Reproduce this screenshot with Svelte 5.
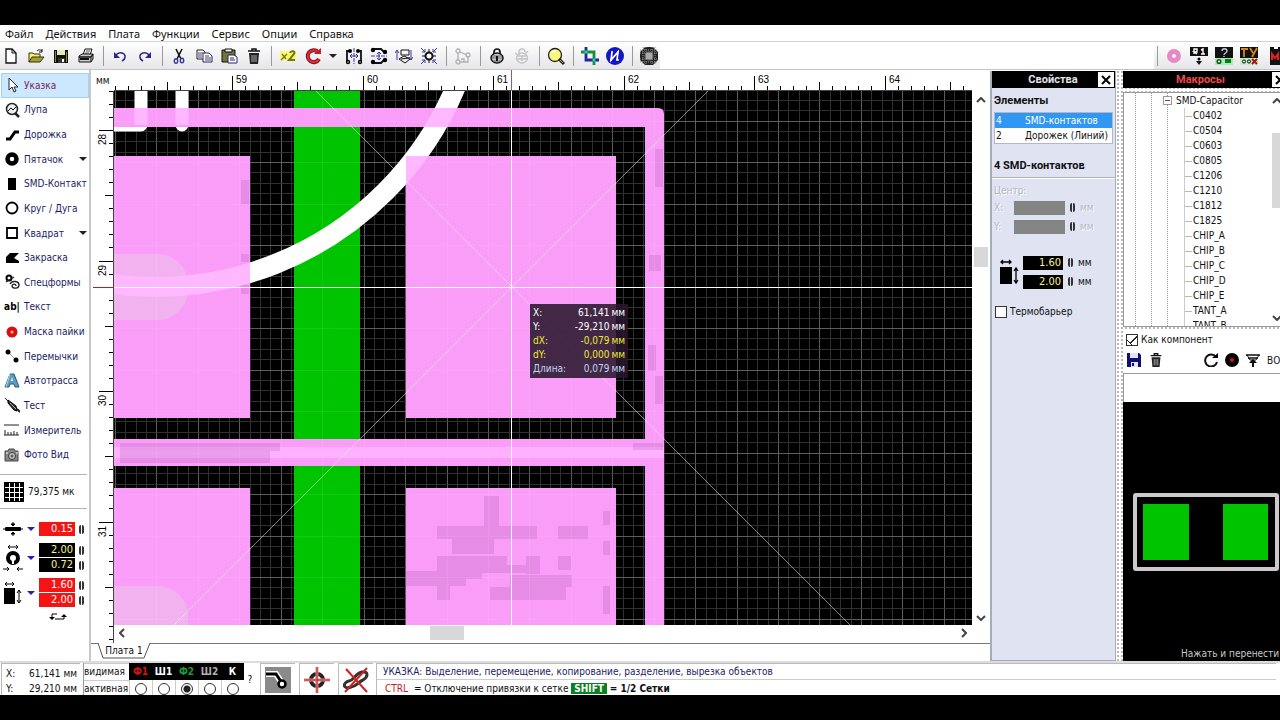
<script lang="ts">
    type tool = {name: string; icon: string; more?: boolean;};
    type layer = {id: string; name: string; color: string;};
    type tick = {pos: number; size: number; label: string;};

    const menu = ['Файл', 'Действия', 'Плата', 'Функции', 'Сервис', 'Опции', 'Справка'];

    // toolbar groups, a separator is drawn between them
    const groups = [
        ['new', 'open', 'save', 'print'],
        ['undo', 'redo'],
        ['cut', 'copy', 'paste', 'trash'],
        ['twice', 'rotate', 'caret', 'mirrorh', 'mirrorv', 'align', 'snap'],
        ['links'],
        ['lock', 'unlock'],
        ['zoom'],
        ['crop', 'info'],
        ['mask']
    ];
    const extra = ['ring', 'r1', 'check', 'ty', 'macro'];

    const tools: tool[] = [
        {name: 'Указка', icon: 'pointer'},
        {name: 'Лупа', icon: 'loupe'},
        {name: 'Дорожка', icon: 'track'},
        {name: 'Пятачок', icon: 'pad', more: true},
        {name: 'SMD-Контакт', icon: 'smd'},
        {name: 'Круг / Дуга', icon: 'circle'},
        {name: 'Квадрат', icon: 'square', more: true},
        {name: 'Закраска', icon: 'zone'},
        {name: 'Спецформы', icon: 'forms'},
        {name: 'Текст', icon: 'text'},
        {name: 'Маска пайки', icon: 'solder'},
        {name: 'Перемычки', icon: 'jumper'},
        {name: 'Автотрасса', icon: 'auto'},
        {name: 'Тест', icon: 'test'},
        {name: 'Измеритель', icon: 'measure'},
        {name: 'Фото Вид', icon: 'photo'}
    ];
    let active = 'Указка';

    const layers: layer[] = [
        {id: 'f1', name: 'Ф1', color: '#d01818'},
        {id: 's1', name: 'Ш1', color: '#ffffff'},
        {id: 'f2', name: 'Ф2', color: '#1c9a38'},
        {id: 's2', name: 'Ш2', color: '#b0b0b0'},
        {id: 'k', name: 'К', color: '#ffffff'}
    ];
    let layer = 'f2';

    const macros = ['C0402', 'C0504', 'C0603', 'C0805', 'C1206', 'C1210', 'C1812', 'C1825',
        'CHIP_A', 'CHIP_B', 'CHIP_C', 'CHIP_D', 'CHIP_E', 'TANT_A', 'TANT_B'];

    let thermal = false;
    let component = true;

    // 1 mm on the board is 130.5 px, the rulers have a tick for every 0.1 mm
    function ruler(origin: number, first: number): tick[] {
        const list: tick[] = [];
        for (let i = -9; i < 200; i++) {
            const whole = i % 10 === 0;
            list.push({
                pos: Math.round(origin + i * 13.05),
                size: whole ? 14 : i % 5 === 0 ? 8 : 4,
                label: whole ? String(first + i / 10) : ''
            });
        }
        return list;
    }
    const top = ruler(118, 59);
    const left = ruler(39, 28);

    const gridx = Array.from({length: 250}, (_, i) => ({pos: Math.round(1 + i * 10.36), major: i % 4 === 0}));
    const gridy = Array.from({length: 150}, (_, i) => ({pos: Math.round(-12 + i * 10.375), major: i % 4 === 0}));

    // darker patches over the pads: x, y, width, height
    const patches = [
        [370, 405, 15, 30], [323, 435, 100, 13], [444, 435, 30, 13], [338, 448, 42, 15], [323, 465, 70, 16],
        [292, 480, 76, 8], [292, 488, 60, 7], [323, 495, 13, 14], [368, 474, 44, 8], [412, 465, 14, 18],
        [444, 465, 13, 14], [396, 484, 62, 12], [376, 496, 76, 13], [489, 420, 7, 14], [489, 450, 7, 14],
        [489, 495, 7, 28], [127, 89, 8, 24], [127, 194, 8, 9], [127, 163, 8, 8], [541, 58, 8, 38],
        [535, 164, 12, 16], [534, 254, 8, 26], [541, 285, 8, 28], [519, 352, 30, 7], [6, 352, 160, 8],
        [6, 360, 150, 12]
    ];

    const k = 'fill="none" stroke="#111"';
    const icons: Record<string, string> = {
        new: `<path d="M4 2h6l4 4v10H4z" fill="#fff" stroke="#111" stroke-width="1.3"/><path d="M10 2v4h4" ${k}/>`,
        open: `<path d="M2 15V6h4l1 1h6v3" fill="#f5ef78" stroke="#33330a"/><path d="M2 15l3-5h12l-4 5z" fill="#a6a033" stroke="#33330a"/><path d="M10 4c2-2 4-1 5 0m0-2v3h-3" ${k}/>`,
        save: `<path d="M2 3h14v13H2z" fill="#111"/><path d="M5 3h8v5H5z" fill="#e8e8b8"/><path d="M3 4h1v11H3zM14 5h1v10h-1z" fill="#8a8a30"/><path d="M6 11h7v5H6z" fill="#333"/><path d="M10 12h2v3h-2z" fill="#fff"/>`,
        print: `<path d="M6 8l2-6h7l-2 6z" fill="#fff" stroke="#111"/><path d="M9 4h4M8 6h4" stroke="#555"/><path d="M2 9l3-2h11l-2 3H2zM2 10h12v5H2zM14 10l2-3v5l-2 3" fill="#ccc" stroke="#111"/><path d="M3 12h9" stroke="#111" stroke-width="2"/>`,
        undo: `<path d="M5 8c3-4 10-2 9 2 0 2-1 3-3 4" fill="none" stroke="#28288c" stroke-width="1.5"/><path d="M3 5v6h6z" fill="#28288c"/>`,
        redo: `<path d="M13 8c-3-4-10-2-9 2 0 2 1 3 3 4" fill="none" stroke="#28288c" stroke-width="1.5"/><path d="M15 5v6H9z" fill="#28288c"/>`,
        cut: `<path d="M6 2l5 10M12 2L7 12" ${k} stroke-width="1.6"/><g fill="none" stroke="#3838a0" stroke-width="1.4"><ellipse cx="6" cy="14" rx="1.7" ry="2.3"/><ellipse cx="12" cy="13.500" rx="1.700" ry="2.300"/></g>`,
        copy: `<path d="M2 3h6l2 2v7H2z" fill="#fff" stroke="#222"/><path d="M3 6h5M3 8h4M3 10h4" stroke="#446"/><path d="M8 6h6l3 3v6H8z" fill="#fff" stroke="#24246c"/><path d="M10 9h4M10 11h6M10 13h6" stroke="#446"/>`,
        paste: `<path d="M2 3h13v12H2z" fill="#74743a" stroke="#111"/><path d="M5 2h7v3H5z" fill="#eee" stroke="#111"/><path d="M8 8h6l3 2v6H8z" fill="#fff" stroke="#24246c"/><path d="M10 11h4M10 13h5" stroke="#24246c"/>`,
        trash: `<path d="M3 4h12M7 4V2h4v2" ${k} stroke-width="1.5"/><path d="M4 6h10l-1 11H5z" fill="#222"/><path d="M7 8v7M9 8v7M11 8v7" stroke="#aaa"/>`,
        twice: `<path d="M1 4h16v9H1z" fill="#f8f878"/><path d="M2 13l6-6M3 7l4 5" stroke="#77770a" stroke-width="1.4"/><path d="M11 6c1-3 6-2 4 1l-5 6h6" fill="none" stroke="#77770a" stroke-width="2"/>`,
        rotate: `<path d="M14 5a6 6 0 1 0 1 7" fill="none" stroke="#7c1220" stroke-width="4"/><path d="M14 5a6 6 0 1 0 1 7" fill="none" stroke="#e42b35" stroke-width="2"/><path d="M10 7h7V1z" fill="#c21e2a"/>`,
        caret: `<path d="M4 7h8l-4 4z" fill="#222"/>`,
        mirrorh: `<path d="M9 1v16" stroke="#3838a8" stroke-dasharray="4 1"/><path d="M5 9h8M7 7L5 9l2 2M11 7l2 2-2 2" fill="none" stroke="#3838a8"/><path d="M5 4H2v10M13 4h3v10" ${k} stroke-width="1.8"/><circle cx="5" cy="4" r="2"/><circle cx="13" cy="4" r="2"/><circle cx="3" cy="15" r="2.200"/><circle cx="15" cy="15" r="2.200"/><circle cx="3" cy="15" r="0.700" fill="#fff"/><circle cx="15" cy="15" r="0.700" fill="#fff"/>`,
        mirrorv: `<path d="M1 9h16" stroke="#3838a8" stroke-dasharray="4 1"/><path d="M9 5v8M7 7l2-2 2 2M7 11l2 2 2-2" fill="none" stroke="#3838a8"/><path d="M3 2h8l3 3M3 16h8l3-3" ${k} stroke-width="1.800"/><circle cx="3" cy="3" r="2.200"/><circle cx="15" cy="5" r="2.200"/><circle cx="3" cy="15" r="2.200"/><circle cx="15" cy="13" r="2.200"/>`,
        align: `<path d="M6 3h8v5H6z" ${k}/><path d="M4 12l5-3 6 3-5 4z" ${k}/><path d="M6 12l8-1" ${k}/><path d="M2 13V4M0 6l2-3 2 3M16 3v10M14 10l2 3 2-3" fill="none" stroke="#3838a8"/>`,
        snap: `<circle cx="9" cy="9" r="3.500" fill="#fff" stroke="#111" stroke-width="2"/><path d="M9 2v3M9 13v3M2 9h3M13 9h3" stroke="#111"/><g fill="none" stroke="#3838a8"><path d="M1 1l4 4M5 2v3H2M17 1l-4 4M13 2v3h3M1 17l4-4M2 13h3v3M17 17l-4-4M16 13h-3v3"/></g>`,
        links: `<g fill="none" stroke="#b0b0b0" stroke-width="1.300"><circle cx="4" cy="4" r="2"/><circle cx="4" cy="15" r="2"/><path d="M4 6v7M6 5l7 3M6 15h8V9M7 12h3v3"/><circle cx="14" cy="8" r="2"/></g>`,
        lock: `<path d="M6 8V5a3 3 0 0 1 6 0v3" ${k} stroke-width="1.700"/><ellipse cx="9" cy="11" rx="6" ry="5" fill="#ccc" stroke="#111" stroke-width="1.500"/><path d="M4 9h10M4 11h10M5 14h8" stroke="#666"/><path d="M9 9v5" stroke="#111" stroke-width="2"/>`,
        unlock: `<g fill="none" stroke="#c4c4c4" stroke-width="1.400"><path d="M6 8V5a3 3 0 0 1 6 0"/><ellipse cx="9" cy="11" rx="5.500" ry="5"/><path d="M4 9h10M4 12h10M9 9v5M2 6l3 2M15 4l-3 3"/></g>`,
        zoom: `<circle cx="8" cy="8" r="6.500" fill="#fbf77c" stroke="#222" stroke-width="1.300"/><path d="M5 6c1-2 3-2 4-2" stroke="#fff" fill="none" stroke-width="1.500"/><path d="M12 12l5 5" stroke="#222" stroke-width="3"/><path d="M13 13l3 3" stroke="#b9a82b"/>`,
        crop: `<path d="M5 0v13h13" fill="none" stroke="#24249c" stroke-width="2.800"/><path d="M0 5h13v13" fill="none" stroke="#189038" stroke-width="2.800"/><circle cx="5" cy="5" r="1.500" fill="#30c8d8"/><circle cx="13" cy="13" r="1.500" fill="#30c8d8"/>`,
        info: `<circle cx="9" cy="9" r="9" fill="#1414c8"/><path d="M6 5L5 13L12 5L11 13M4 13h2M10 13h3M5 5h2M11 5h2" fill="none" stroke="#fff" stroke-width="1.700"/>`,
        mask: `<path d="M5 0h8l5 5v8l-5 5H5l-5-5V5z" fill="#222"/><path d="M3 0v18M6 0v18M12 0v18M15 0v18M0 3h18M0 6h18M0 12h18M0 15h18" stroke="#999" stroke-dasharray="1 1"/><circle cx="9" cy="9" r="4.500" fill="#777"/><path d="M6 7h6M6 9h6M6 11h6M7 6v6M9 6v6M11 6v6" stroke="#bbb"/>`,
        ring: `<circle cx="9" cy="9" r="4.500" fill="none" stroke="#e48bc4" stroke-width="5"/>`,
        r1: `<path d="M0 0h18v9H0z" fill="#111"/><path d="M4 7V2h3v3H4l3 2M11 3l2-1v5M11 7h4" fill="none" stroke="#fff" stroke-width="1.400"/><circle cx="9" cy="12" r="1.500"/><path d="M6 14h6l-3 4z" fill="#111"/>`,
        check: `<path d="M0 0h18v11H0z" fill="#111"/><path d="M7 4c0-3 5-3 5 0 0 2-3 2-3 4M9 9v1" fill="none" stroke="#bcc8e0" stroke-width="1.400"/><path d="M0 11h18v7H0z" fill="#a5eeb0"/><circle cx="4" cy="14.500" r="1.800" fill="#fff" stroke="#125520" stroke-width="1.500"/><path d="M10 12h6v4h-6z" fill="#0b7a20"/>`,
        ty: `<path d="M0 0h18v11H0z" fill="#111"/><path d="M1 2h7M4 2v8M10 1l3 5M17 1l-5 9" fill="none" stroke="#d88418" stroke-width="1.800"/><path d="M0 11h18v7H0z" fill="#c4eec4"/><circle cx="4" cy="14.500" r="1.600" ${k}/><circle cx="9" cy="14.500" r="1.600" ${k}/><path d="M12 12l5 5M17 12l-5 5" stroke="#b01010" stroke-width="2"/>`,
        macro: `<path d="M5 0h13v18H5z" fill="#111"/><path d="M7 13V7l3 4 3-4v6" fill="none" stroke="#e02020" stroke-width="2"/><path d="M9 0h4v2H9z" fill="#fff"/>`,

        pointer: `<path d="M5 1v12l3-3 2 5 2-1-2-4h4z" fill="#fff" stroke="#223"/>`,
        loupe: `<circle cx="8" cy="7" r="5.500" fill="#eee" stroke="#222" stroke-width="1.500"/><path d="M4 9l3-3 2 2 3-3" ${k}/><path d="M11 11l4 4" stroke="#222" stroke-width="2.500"/>`,
        track: `<path d="M2 12h4l5-7h4" fill="none" stroke="#000" stroke-width="3"/>`,
        pad: `<circle cx="8" cy="8" r="4.500" fill="#fff" stroke="#000" stroke-width="4.500"/>`,
        smd: `<path d="M4 2h8v12H4z"/>`,
        circle: `<circle cx="8" cy="8" r="5.500" fill="none" stroke="#000" stroke-width="1.800"/>`,
        square: `<path d="M3 3h10v10H3z" fill="none" stroke="#000" stroke-width="1.800"/>`,
        zone: `<path d="M2 13V7l4-4h9l-5 5 5 3v2z"/>`,
        forms: `<circle cx="5" cy="4" r="2.500" fill="none" stroke="#000" stroke-width="2"/><path d="M2 8l8-5M6 10c2-4 9-3 9 1 0 4-7 4-7 1 0-2 4-3 4 0" fill="none" stroke="#222" stroke-width="1.400"/>`,
        solder: `<circle cx="8" cy="8" r="3.500" fill="#ffb0a0" stroke="#d81010" stroke-width="4"/>`,
        jumper: `<path d="M4 4l8 8" stroke="#999"/><circle cx="4" cy="4" r="2.500"/><circle cx="12" cy="12" r="2.500"/>`,
        auto: `<path d="M1 14L6 1h4l5 13h-4l-1-3H6l-1 3z" fill="#5c9cc0" stroke="#2c5878"/><path d="M7 8l1-4 1 4z" fill="#fff"/><path d="M6 1L2 14" stroke="#b4dcf0"/>`,
        test: `<path d="M1 1l4 4" stroke="#222"/><path d="M4 3l8 6 1 5-3-1-6-7z" fill="#333" stroke="#000"/><path d="M13 12l3 3" stroke="#222" stroke-width="2"/><path d="M6 6l6 6" stroke="#aaa"/>`,
        measure: `<path d="M0 3h15M0 13h15" stroke="#222"/><path d="M1 8v5M4 10v3M7 10v3M10 9v4M13 10v3" stroke="#222"/>`,
        photo: `<path d="M1 4h3l1-2h5l1 2h3v10H1z" fill="#888" stroke="#444"/><circle cx="8" cy="9" r="3.500" fill="#ccc" stroke="#333"/><circle cx="8" cy="9" r="1.500" fill="#555"/><path d="M2 6h2M12 6h2" stroke="#eee"/>`
    };
</script>

<div class="screen">
<div class="app">
    <nav class="menu">
        {#each menu as item}
            <button>{item}</button>
        {/each}
    </nav>

    <div class="toolbar">
        <div class="group">
            {#each groups as group, i}
                {#if i > 0}<span class="sep"></span>{/if}
                {#each group as name}
                    <button class:narrow={name === 'caret'} aria-label={name}>
                        <svg viewBox="0 0 18 18" width="18" height="18">{@html icons[name]}</svg>
                    </button>
                {/each}
            {/each}
        </div>
        <div class="group right">
            <span class="sep"></span>
            {#each extra as name}
                <button aria-label={name}>
                    <svg viewBox="0 0 18 18" width="18" height="18">{@html icons[name]}</svg>
                </button>
            {/each}
        </div>
    </div>

    <div class="work">
        <aside class="side">
            <div class="tools">
                {#each tools as {name, icon, more}}
                    <button class:active={active === name} on:click={() => (active = name)}>
                        {#if icon === 'text'}
                            <span class="ab">ab|</span>
                        {:else}
                            <svg viewBox="0 0 16 16" width="16" height="16">{@html icons[icon]}</svg>
                        {/if}
                        <span class="tool-name">{name}</span>
                        {#if more}<span class="more"></span>{/if}
                    </button>
                {/each}
            </div>

            <div class="grid-size">
                <svg viewBox="0 0 20 20" width="20" height="20">
                    <rect width="20" height="20" />
                    <path d="M5.500 1v18M10.500 1v18M15.500 1v18M1 5.500h18M1 10.500h18M1 15.500h18" stroke="#fff" />
                </svg>
                <span>79,375 мк</span>
            </div>

            <div class="sizes">
                <div class="size">
                    <svg viewBox="0 0 20 16" width="20" height="16">
                        <rect x="2" y="6" width="16" height="4" rx="1" />
                        <path d="M0 8h20M8 3h4l-2 2zM8 13h4l-2-2zM10 1v3M10 12v3" stroke="#000" />
                    </svg>
                    <span class="blue"></span>
                    <div class="values">
                        <input class="red" aria-label="Ширина дорожки" value="0.15" />
                    </div>
                    <div class="spins"><span class="spin"></span></div>
                </div>
                <div class="size">
                    <svg viewBox="0 0 20 28" width="20" height="28">
                        <circle cx="10" cy="14" r="5" fill="#fff" stroke="#000" stroke-width="4" />
                        <path d="M10 14v6" stroke="#fff" stroke-width="2" />
                        <path d="M5 3h10M7 1L5 3l2 2M13 1l2 2-2 2M0 25h6M4 23l2 2-2 2M20 25h-6M16 23l-2 2 2 2" fill="none" stroke="#000" />
                    </svg>
                    <span class="blue"></span>
                    <div class="values">
                        <input aria-label="Внешний диаметр" value="2.00" />
                        <input aria-label="Внутренний диаметр" value="0.72" />
                    </div>
                    <div class="spins"><span class="spin"></span><span class="spin"></span></div>
                </div>
                <div class="size">
                    <svg viewBox="0 0 20 24" width="20" height="24">
                        <rect x="1" y="7" width="11" height="16" />
                        <path d="M2 3h9M4 1L2 3l2 2M9 1l2 2-2 2M16 9v13M14 12l2-3 2 3M14 19l2 3 2-3" fill="none" stroke="#000" />
                    </svg>
                    <span class="blue"></span>
                    <div class="values">
                        <input class="red" aria-label="Ширина контакта" value="1.60" />
                        <input class="red" aria-label="Высота контакта" value="2.00" />
                    </div>
                    <div class="spins"><span class="spin"></span><span class="spin"></span></div>
                </div>
                <button class="swap" aria-label="Поменять местами">
                    <svg viewBox="0 0 20 8" width="20" height="8">
                        <path d="M9 1H4v3M7 6h9V3" fill="none" stroke="#000" />
                        <path d="M1 4h6l-3 3zM13 4h6l-3-3z" />
                    </svg>
                </button>
            </div>
        </aside>

        <main class="board">
            <div class="unit">мм</div>
            <svg class="ruler-top" width="100%" height="21">
                <rect y="20" width="100%" height="1" fill="#444" />
                {#each top as {pos, size, label}}
                    <rect x={pos} y={20 - size} width="1" height={size} />
                    {#if label}<text x={pos + 4} y="13">{label}</text>{/if}
                {/each}
                <rect x="397" y="0" width="1" height="21" fill="#b05068" />
            </svg>
            <svg class="ruler-left" width="23" height="100%">
                <rect x="22" y="0" width="1" height="100%" fill="#444" />
                {#each left as {pos, size, label}}
                    <rect x={22 - size} y={pos} width={size} height="1" />
                    {#if label}<text transform="translate(15 {pos + 15}) rotate(-90)">{label}</text>{/if}
                {/each}
                <rect x="2" y="196" width="20" height="1" fill="#b02020" />
            </svg>

            <div class="canvas">
                <svg width="100%" height="100%">
                    <rect width="100%" height="100%" fill="#000" />
                    <g class="grid">
                        {#each gridx as {pos, major}}
                            <rect class:major x={pos} y="0" width="1" height="100%" />
                        {/each}
                        {#each gridy as {pos, major}}
                            <rect class:major x="0" y={pos} width="100%" height="1" />
                        {/each}
                    </g>
                    <rect x="180" width="66" height="100%" fill="#00c400" />
                    <circle cx="41" cy="-130" r="326" fill="none" stroke="#fff" stroke-width="20" />
                    <path d="M-10 34h37V-10M68 -10v44" fill="none" stroke="#fff" stroke-width="13" stroke-linejoin="round" stroke-linecap="round" />

                    <g fill="#f99df9">
                        <path d="M0 17h544q6 0 6 6v2000h-19V36H0z" />
                        <rect y="348" width="550" height="27" />
                        <rect y="65" width="136" height="262" />
                        <rect x="292" y="65" width="210" height="262" />
                        <rect y="397" width="136" height="262" />
                        <rect x="292" y="397" width="210" height="262" />
                    </g>
                    <rect y="356" width="550" height="11" fill="#ffb0ff" />
                    <g fill="#ecc8e6" opacity="0.5">
                        <rect x="-60" y="163" width="134" height="66" rx="30" />
                        <rect x="-60" y="495" width="134" height="66" rx="30" />
                    </g>
                    <g fill="#8c3c8c" opacity="0.17">
                        {#each patches as [x, y, width, height]}
                            <rect {x} {y} {width} {height} />
                        {/each}
                    </g>
                    <clipPath id="pads">
                        <rect y="17" width="531" height="19" />
                        <rect y="65" width="136" height="262" />
                        <rect x="292" y="65" width="210" height="262" />
                    </clipPath>
                    <g clip-path="url(#pads)" fill="none" stroke="#ffb8ff">
                        <circle cx="41" cy="-130" r="326" stroke-width="20" />
                        <path d="M27 34V-10M68 -10v44" stroke-width="13" />
                    </g>
                    <g class="faint">
                        {#each gridx as {pos, major}}
                            {#if major}<rect x={pos} y="0" width="1" height="100%" />{/if}
                        {/each}
                        {#each gridy as {pos, major}}
                            {#if major}<rect x="0" y={pos} width="100%" height="1" />{/if}
                        {/each}
                    </g>
                    <path d="M-1602 -1804l4000 4000M2398 -1804l-4000 4000" stroke="#fff" opacity="0.5" />
                    <rect x="397" width="1" height="100%" fill="#fff" />
                    <rect y="196" width="100%" height="1" fill="#fff" />
                </svg>
                <dl class="coords">
                    <dt>X:</dt><dd>61,141</dd><dd>мм</dd>
                    <dt>Y:</dt><dd>-29,210</dd><dd>мм</dd>
                    <dt class="yellow">dX:</dt><dd class="yellow">-0,079</dd><dd class="yellow">мм</dd>
                    <dt class="yellow">dY:</dt><dd class="yellow">0,000</dd><dd class="yellow">мм</dd>
                    <dt class="len">Длина:</dt><dd class="len">0,079</dd><dd class="len">мм</dd>
                </dl>
            </div>

            <div class="vscroll">
                <svg viewBox="0 0 10 6" width="10" height="6"><path d="M1 5l4-4 4 4" /></svg>
                <div class="track"><span class="thumb"></span></div>
                <svg viewBox="0 0 10 6" width="10" height="6"><path d="M1 1l4 4 4-4" /></svg>
            </div>
            <div class="hscroll">
                <svg viewBox="0 0 6 10" width="6" height="10"><path d="M5 1L1 5l4 4" /></svg>
                <div class="track"><span class="thumb"></span></div>
                <svg viewBox="0 0 6 10" width="6" height="10"><path d="M1 1l4 4-4 4" /></svg>
            </div>
            <div class="tabs">
                <button class="tab">
                    <svg viewBox="0 0 54 17" width="54" height="17"><path d="M1 0l5 15h41l6-15" fill="#fff" stroke="#555" /></svg>
                    <span>Плата 1</span>
                </button>
            </div>
        </main>

        <section class="props">
            <header>
                <h2>Свойства</h2>
                <button class="close" aria-label="Закрыть">
                    <svg viewBox="0 0 10 10" width="10" height="10"><path d="M1 1l8 8M9 1L1 9" stroke="#000" stroke-width="2" /></svg>
                </button>
            </header>
            <h3>Элементы</h3>
            <ul class="elements">
                <li class="selected"><span>4</span>SMD-контактов</li>
                <li><span>2</span>Дорожек (Линий)</li>
            </ul>
            <h3 class="chosen">4 SMD-контактов</h3>
            <div class="center">
                <p>Центр:</p>
                <div class="row"><label for="cx">X:</label><input id="cx" disabled /><span class="spin"></span><span>мм</span></div>
                <div class="row"><label for="cy">Y:</label><input id="cy" disabled /><span class="spin"></span><span>мм</span></div>
            </div>
            <div class="dims">
                <svg viewBox="0 0 20 28" width="20" height="28">
                    <rect x="1" y="9" width="12" height="17" />
                    <path d="M2 4h10M4 2L2 4l2 2M10 2l2 2-2 2M17 10v15M15 13l2-3 2 3M15 22l2 3 2-3" fill="none" stroke="#000" stroke-width="1.300" />
                </svg>
                <div class="dim-rows">
                    <div class="row"><input aria-label="Ширина" value="1.60" /><span class="spin"></span><span>мм</span></div>
                    <div class="row"><input aria-label="Высота" value="2.00" /><span class="spin"></span><span>мм</span></div>
                </div>
            </div>
            <label class="tick"><input type="checkbox" bind:checked={thermal} />Термобарьер</label>
        </section>

        <section class="macros">
            <header>
                <h2>Макросы</h2>
                <button class="close" aria-label="Закрыть">
                    <svg viewBox="0 0 10 10" width="10" height="10"><path d="M1 1l8 8M9 1L1 9" stroke="#000" stroke-width="2" /></svg>
                </button>
            </header>
            <div class="tree">
                <div class="guides"><i></i><i></i><i></i></div>
                <ul>
                    <li class="root"><span class="fold"></span>SMD-Capacitor</li>
                    {#each macros as name}
                        <li>{name}</li>
                    {/each}
                </ul>
                <div class="tree-scroll">
                    <svg viewBox="0 0 10 6" width="10" height="6"><path d="M1 5l4-4 4 4" /></svg>
                    <span class="thumb"></span>
                    <svg viewBox="0 0 10 6" width="10" height="6"><path d="M1 1l4 4 4-4" /></svg>
                </div>
            </div>
            <label class="tick as-part"><input type="checkbox" bind:checked={component} />Как компонент</label>
            <div class="macro-bar">
                <button aria-label="Сохранить">
                    <svg viewBox="0 0 14 14" width="14" height="14"><path d="M0 0h12l2 2v12H0z" fill="#101070" /><path d="M3 0h8v5H3zM4 9h7v5H4z" fill="#e4e4f4" /><path d="M5 10h2v3H5z" fill="#101070" /></svg>
                </button>
                <button class="bin" aria-label="Удалить">
                    <svg viewBox="0 0 18 18" width="16" height="16">{@html icons.trash}</svg>
                </button>
                <button aria-label="Повернуть">
                    <svg viewBox="0 0 14 14" width="14" height="14"><path d="M12 4a6 6 0 1 0 1 5" fill="none" stroke="#111" stroke-width="2" /><path d="M8 5h6V0z" /></svg>
                </button>
                <button aria-label="Точка">
                    <svg viewBox="0 0 14 14" width="14" height="14"><circle cx="7" cy="7" r="7" /><circle cx="7" cy="7" r="2" fill="#d01818" /></svg>
                </button>
                <button aria-label="Вставить">
                    <svg viewBox="0 0 14 14" width="14" height="14"><path d="M0 2h14M2 5h10" stroke="#111" stroke-width="1.500" /><path d="M1 2l3 5h6l3-5" fill="none" stroke="#111" /><path d="M3 10l4-4 4 4z" /><path d="M7 8v6" stroke="#111" stroke-width="2" /></svg>
                </button>
                <span>ВО</span>
            </div>
            <input class="macro-name" aria-label="Имя макроса" />
            <div class="preview">
                <svg viewBox="0 0 146 78" width="146" height="78">
                    <rect x="2" y="2" width="142" height="74" rx="1" fill="#000" stroke="#ccc8cc" stroke-width="4" />
                    <rect x="10" y="11" width="46" height="56" fill="#00c400" />
                    <rect x="90" y="11" width="45" height="56" fill="#00c400" />
                </svg>
                <p>Нажать и перенести</p>
            </div>
        </section>
    </div>

    <footer class="status">
        <div class="pos">
            <span>X:</span><span>61,141 мм</span>
            <span>Y:</span><span>29,210 мм</span>
        </div>
        <div class="layers">
            <span>видимая</span>
            {#each layers as {id, name, color}}
                <label for={id} style="color: {color}">{name}</label>
            {/each}
            <span>активная</span>
            {#each layers as {id}}
                <div class="radio"><input type="radio" {id} value={id} bind:group={layer} /></div>
            {/each}
        </div>
        <button class="help">?</button>
        <button class="mode" aria-label="Излом">
            <svg viewBox="0 0 26 26" width="26" height="26"><rect width="26" height="26" fill="#8a8a8a" /><path d="M1 7h10l6 9" fill="none" stroke="#fff" stroke-width="6" /><path d="M1 7h10l6 9" fill="none" stroke="#000" stroke-width="3" /><circle cx="17" cy="17" r="3.500" fill="#fff" stroke="#000" stroke-width="2.500" /></svg>
        </button>
        <button class="mode" aria-label="Захват">
            <svg viewBox="0 0 26 26" width="26" height="26"><circle cx="13" cy="13" r="6" fill="#fff" stroke="#222" stroke-width="4" /><path d="M13 0v26M0 13h26" stroke="#e88" stroke-width="3" /><path d="M13 0v26M0 13h26" stroke="#a03030" /></svg>
        </button>
        <button class="mode" aria-label="Без контура">
            <svg viewBox="0 0 26 26" width="26" height="26"><path d="M8 20c-8 3-9-4-2-6 6-1 5-7 13-9 7-1 6 5 1 8-5 2-6 6-12 7z" fill="none" stroke="#333" stroke-width="3" /><path d="M3 2l21 23M24 1L2 25" stroke="#d02020" stroke-width="2" /></svg>
        </button>
        <div class="hints">
            <p class="hint">УКАЗКА: Выделение, перемещение, копирование, разделение, вырезка объектов</p>
            <p><span class="ctrl">CTRL</span> = Отключение привязки к сетке <kbd>SHIFT</kbd> <b>= 1/2 Сетки</b></p>
        </div>
    </footer>
</div>
</div>

<style>
    :global(body) {
        background: #000;
    }

    .screen {
        box-sizing: border-box;
        height: 100vh;
        padding: 25px 0;
        font: 10px/15px "DejaVu Sans Condensed", "DejaVu Sans", sans-serif;
        color: #111;
        overflow: hidden;
    }

    .screen :is(*) {
        box-sizing: border-box;
    }

    .app {
        display: flex;
        flex-direction: column;
        height: 100%;
        background: #fff;
        overflow: hidden;
    }

    button {
        font: inherit;
        color: inherit;
        background: none;
        border: none;
        padding: 0;
        cursor: pointer;
    }

    svg {
        display: block;
        flex: none;
    }

    h2, h3, p, ul, dl, dd {
        margin: 0;
        padding: 0;
        list-style: none;
    }

    .menu {
        display: flex;
        gap: 12px;
        padding: 0 5px;
        height: 17px;
        border-bottom: 1px solid #d4d4d4;
        font: 11px/15px "Noto Sans", sans-serif;
    }

    .toolbar {
        display: flex;
        justify-content: space-between;
        height: 28px;
        border-bottom: 1px solid #c4c4c4;
        overflow: hidden;
    }

    .group {
        display: flex;
        align-items: center;
        gap: 3px;
        background: linear-gradient(#fff, #e6e6ea);
    }

    .group.right {
        margin-right: -5px;
    }

    .group button {
        display: flex;
        justify-content: center;
        width: 22px;
    }

    .group .narrow {
        width: 13px;
    }

    .sep {
        width: 6px;
        height: 20px;
        background: linear-gradient(#999, #999) center / 1px 100% no-repeat;
    }

    .work {
        display: flex;
        flex: 1;
        min-height: 0;
    }

    /* left tools */
    .side {
        display: flex;
        flex-direction: column;
        flex: none;
        width: 91px;
        padding-top: 3px;
        border-right: 2px solid #c8c8c8;
    }

    .tools {
        display: flex;
        flex-direction: column;
        flex: 1;
        color: #1c1c64;
    }

    .tools button {
        display: flex;
        align-items: center;
        flex: 1;
        gap: 4px;
        padding: 0 2px 0 3px;
        margin-left: 1px;
        white-space: nowrap;
    }

    .tools .active {
        background: #cce8ff;
        outline: 1px solid #a4d2f4;
        outline-offset: -1px;
        color: #7c2050;
    }

    .ab {
        width: 16px;
        color: #000;
        font-weight: bold;
    }

    .more {
        margin-left: auto;
        border: 4px solid transparent;
        border-top-color: #222;
        border-bottom: 0;
    }

    .grid-size {
        display: flex;
        align-items: center;
        gap: 4px;
        height: 35px;
        margin: 7px 2px 0 0;
        padding-left: 4px;
        border: solid #b4b4b4;
        border-width: 1px 0;
    }

    .sizes {
        display: flex;
        flex-direction: column;
        gap: 6px;
        padding: 12px 0 40px 3px;
    }

    .size {
        display: flex;
        align-items: center;
        gap: 4px;
    }

    .blue {
        border: 4px solid transparent;
        border-top-color: #2020c0;
        border-bottom: 0;
    }

    .values {
        display: flex;
        flex-direction: column;
        gap: 1px;
    }

    input {
        min-width: 0;
        border: none;
        font: inherit;
    }

    .values input,
    .dims input {
        width: 36px;
        height: 14px;
        padding: 0 2px;
        background: #000;
        color: #f4f090;
        font-size: 11px;
        line-height: 14px;
        text-align: right;
    }

    .values .red {
        background: #f41414;
        color: #fff;
    }

    .spins {
        display: flex;
        flex-direction: column;
        gap: 6px;
    }

    .spin {
        width: 5px;
        height: 9px;
        border: solid #333;
        border-width: 0 2px;
        border-radius: 2px;
    }

    .swap {
        align-self: flex-end;
        margin-right: 21px;
    }

    /* board */
    .board {
        display: grid;
        grid-template-columns: 23px minmax(0, 1fr) 18px;
        grid-template-rows: 21px minmax(0, 1fr) 18px 18px;
        flex: 1;
        min-width: 0;
    }

    .unit {
        padding: 3px 0 0 5px;
    }

    .ruler-top {
        grid-column: 2;
    }

    .ruler-left {
        grid-row: 2 / 4;
        grid-column: 1;
    }

    .ruler-top text,
    .ruler-left text {
        font: 10px "Liberation Sans", Arial, sans-serif;
    }

    .canvas {
        grid-row: 2;
        grid-column: 2;
        position: relative;
        overflow: hidden;
    }

    .grid rect {
        fill: #303030;
    }

    .grid .major {
        fill: #505050;
    }

    .faint rect {
        fill: rgba(255, 255, 255, 0.08);
    }

    .coords {
        position: absolute;
        left: 416px;
        top: 213px;
        display: grid;
        grid-template-columns: auto 1fr auto;
        column-gap: 2px;
        width: 98px;
        padding: 2px 3px;
        background: rgba(40, 24, 44, 0.88);
        color: #fff;
        line-height: 14px;
    }

    .coords dd {
        text-align: right;
    }

    .coords .yellow {
        color: #f0e830;
    }

    .coords .len {
        color: #c4d4f4;
    }

    .vscroll,
    .hscroll {
        display: flex;
        align-items: center;
        justify-content: space-between;
    }

    .vscroll {
        grid-row: 2;
        grid-column: 3;
        flex-direction: column;
        padding: 6px 0 4px;
    }

    .hscroll {
        grid-row: 3;
        grid-column: 2;
        padding: 0 5px 2px;
    }

    .track {
        display: flex;
        flex: 1;
    }

    .vscroll .track {
        flex-direction: column;
        padding-top: 144px;
    }

    .hscroll .track {
        padding-left: 36%;
    }

    .vscroll svg,
    .hscroll svg,
    .tree-scroll svg {
        fill: none;
        stroke: #444;
        stroke-width: 2;
    }

    .thumb {
        background: #d8d8d8;
    }

    .vscroll .thumb {
        width: 14px;
        height: 20px;
    }

    .hscroll .thumb {
        width: 34px;
        height: 14px;
    }

    .tabs {
        grid-column: 1 / 4;
        border-top: 1px solid #777;
    }

    .tab {
        position: relative;
        display: flex;
        margin-left: 6px;
        margin-top: -1px;
        width: 54px;
        justify-content: center;
    }

    .tab svg {
        position: absolute;
        left: 0;
        top: 0;
    }

    .tab span {
        position: relative;
        white-space: nowrap;
    }

    /* panels */
    header {
        display: flex;
        align-items: center;
        height: 17px;
        padding-left: 16px;
        background: #000;
    }

    header h2 {
        flex: 1;
        font: bold 11px/17px Roboto, sans-serif;
        text-align: center;
        color: #e4e4ec;
    }

    .close {
        display: flex;
        align-items: center;
        justify-content: center;
        width: 16px;
        height: 15px;
        background: #fff;
    }

    .props {
        flex: none;
        width: 126px;
        margin-top: 1px;
        border: solid #a8acb8;
        border-width: 0 1px 1px 2px;
        background: #dfe3f2;
    }

    .props header {
        padding-right: 1px;
    }

    .props h3 {
        padding: 5px 2px 4px;
        font: bold 11px/15px Roboto, sans-serif;
    }

    .elements {
        margin: 0 2px;
        background: #fff;
        border: 1px solid #b4b8c4;
    }

    .elements li {
        display: flex;
        white-space: nowrap;
    }

    .elements span {
        flex: none;
        width: 30px;
        padding-left: 1px;
    }

    .elements .selected {
        background: #3098f4;
        color: #fff;
    }

    .props .chosen {
        padding-top: 14px;
        border-bottom: 1px solid #b0b4c0;
        box-shadow: 0 1px #fff;
    }

    .center {
        padding: 5px 2px 6px;
        color: #b4b8c4;
        text-shadow: 1px 1px #fff;
    }

    .row {
        display: flex;
        align-items: center;
        gap: 5px;
        height: 19px;
    }

    .center label {
        width: 15px;
    }

    .center input {
        width: 51px;
        height: 14px;
        background: #848484;
    }

    .dims {
        display: flex;
        align-items: center;
        gap: 4px;
        padding: 11px 0 0 7px;
    }

    .dims input {
        width: 40px;
        height: 14px;
    }

    .tick {
        display: flex;
        align-items: center;
        gap: 3px;
        white-space: nowrap;
    }

    .props .tick {
        padding: 13px 3px;
    }

    input[type="checkbox"],
    input[type="radio"] {
        appearance: none;
        flex: none;
        width: 12px;
        height: 12px;
        margin: 0;
        border: 1px solid #333;
        background: #fff;
    }

    input[type="checkbox"]:checked {
        background:
            linear-gradient(45deg, transparent 45%, #222 45% 55%, transparent 55%) 0 5px / 5px 5px no-repeat,
            linear-gradient(135deg, transparent 44%, #222 44% 56%, transparent 56%) 3px 1px / 7px 8px no-repeat;
    }

    input[type="radio"] {
        border-radius: 50%;
    }

    input[type="radio"]:checked {
        background: radial-gradient(#222 3px, #fff 4px);
    }

    .macros {
        display: flex;
        flex-direction: column;
        flex: none;
        width: 164px;
        padding: 1px 0 0 7px;
        background: radial-gradient(circle, #bbb 1px, transparent 1px) 0 0 / 4px 4px;
        overflow: hidden;
    }

    .macros header {
        flex: none;
        margin-right: -8px;
        padding-left: 6px;
    }

    .macros h2 {
        color: #f04848;
    }

    .tree {
        display: flex;
        flex: none;
        height: 235px;
        margin-top: 4px;
        background: #fff;
        border: solid #999;
        border-width: 1px 0 1px 1px;
        overflow: hidden;
    }

    .guides {
        display: flex;
        gap: 15px;
        padding-left: 11px;
    }

    .guides i {
        border-left: 1px dotted #999;
    }

    .tree ul {
        flex: 1;
        margin-left: 16px;
    }

    .tree li {
        display: flex;
        align-items: center;
        padding-left: 8px;
        height: 15px;
        background: linear-gradient(#bbb, #bbb) 0 8px / 7px 1px no-repeat;
        border-left: 1px solid #ccc;
        white-space: nowrap;
    }

    .tree .root {
        gap: 4px;
        margin-left: -21px;
        padding: 0;
        background: none;
        border: none;
    }

    .fold {
        width: 9px;
        height: 9px;
        border: 1px solid #999;
        background: linear-gradient(#555, #555) center / 5px 1px no-repeat #fff;
    }

    .tree-scroll {
        display: flex;
        flex-direction: column;
        justify-content: space-between;
        width: 8px;
        padding: 5px 0;
    }

    .tree-scroll .thumb {
        height: 75px;
        margin-bottom: 78px;
    }

    .as-part {
        padding: 3px 3px 4px;
        margin-top: 2px;
        background: #fff;
    }

    .macro-bar {
        display: flex;
        flex: none;
        align-items: center;
        gap: 7px;
        height: 22px;
        padding: 0 0 4px 4px;
        background: #fff;
    }

    .macro-bar .bin {
        margin-right: 33px;
    }

    .macro-name {
        flex: none;
        height: 29px;
        border: solid #999;
        border-width: 1px 0 0 1px;
        background: #fff;
    }

    .macros .preview {
        position: relative;
        display: flex;
        align-items: center;
        flex: 1;
        padding-left: 10px;
        background: #000;
        overflow: hidden;
    }

    .preview p {
        position: absolute;
        left: 58px;
        bottom: 0;
        color: #c8c8c8;
        white-space: nowrap;
    }

    /* status bar */
    .status {
        display: flex;
        flex: none;
        height: 34px;
        padding: 0 4px 0 1px;
        border-top: 2px solid #dcdcdc;
        overflow: hidden;
    }

    .pos {
        display: grid;
        grid-template-columns: auto auto;
        justify-content: space-between;
        width: 79px;
        padding: 2px 3px 0 4px;
        border: solid #b8b8b8;
        border-width: 1px 0 0 1px;
        white-space: nowrap;
    }

    .layers {
        display: grid;
        grid-template-columns: 45px repeat(5, 23px);
        grid-auto-rows: 17px;
        margin-left: 3px;
        border-left: 1px solid #999;
        overflow: hidden;
    }

    .layers span {
        border-top: 1px solid #ccc;
    }

    .layers label {
        background: #000;
        font-weight: bold;
        text-align: center;
        line-height: 17px;
    }

    .radio {
        display: flex;
        align-items: center;
        justify-content: center;
        border-left: 1px solid #ccc;
    }

    .help {
        width: 12px;
    }

    .mode {
        display: flex;
        align-items: center;
        justify-content: center;
        width: 35px;
        margin-left: 4px;
        border: solid #bbb;
        border-width: 1px 0 0 1px;
    }

    .hints {
        flex: 1;
        min-width: 0;
        margin-left: 3px;
        border: solid #bbb;
        border-width: 1px 0 0 1px;
        white-space: nowrap;
    }

    .hints p {
        padding: 0 8px;
        line-height: 17px;
    }

    .hints .hint {
        padding-left: 6px;
        line-height: 15px;
        color: #1c1c64;
        border-bottom: 1px solid #ccc;
    }

    .ctrl {
        margin-right: 3px;
        color: #c02020;
    }

    kbd {
        padding: 0 3px;
        background: #0a8020;
        color: #fff;
        font: bold 10px/14px "DejaVu Sans Condensed", sans-serif;
    }
</style>
